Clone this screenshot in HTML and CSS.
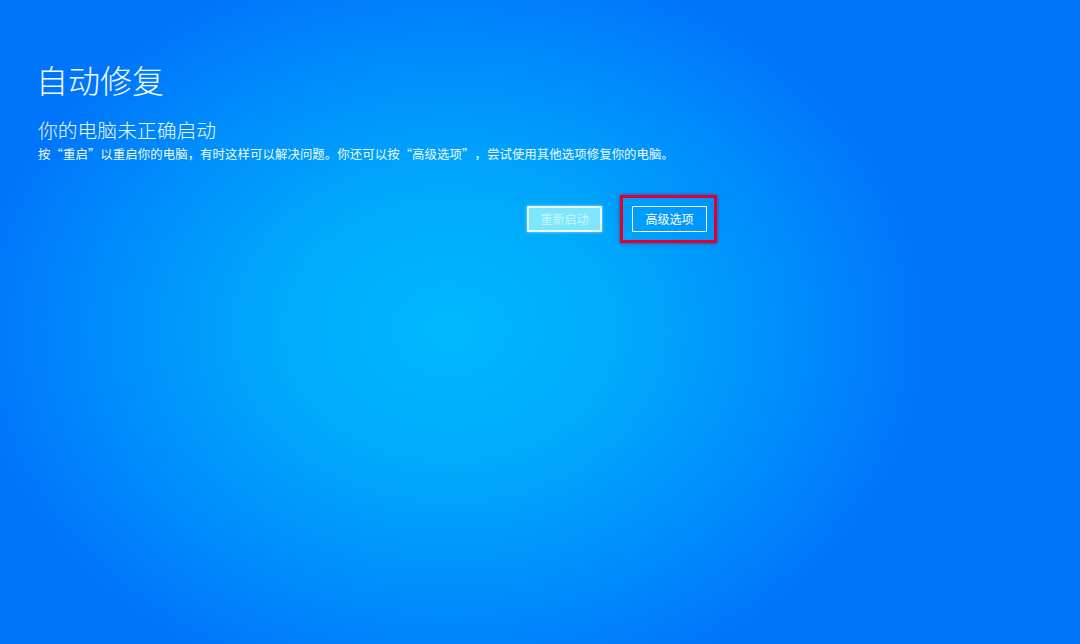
FILE: index.html
```html
<!DOCTYPE html>
<html lang="zh-CN">
<head>
<meta charset="utf-8">
<link rel="stylesheet" href="styles.css">
</head>
<body>
<main class="screen">
  <h1 class="title">自动修复</h1>
  <h2 class="subtitle">你的电脑未正确启动</h2>
  <p class="desc">按“重启”以重启你的电脑，有时这样可以解决问题。你还可以按“高级选项”，尝试使用其他选项修复你的电脑。</p>
  <div class="actions">
    <button class="btn btn-primary">重新启动</button>
    <div class="highlight">
      <button class="btn btn-outline">高级选项</button>
    </div>
  </div>
</main>
</body>
</html>
```

FILE: styles.css
```css
html, body {
  margin: 0;
  padding: 0;
  width: 1080px;
  height: 644px;
  overflow: hidden;
}
body {
  background: radial-gradient(ellipse 480px 380px at 450px 330px, #00b8fd 0%, #00aafc 35%, #008efb 70%, #0074fb 100%);
  background-color: #0074fb;
  font-family: "Noto Sans CJK SC", "Microsoft YaHei", sans-serif;
  color: #ffffff;
  text-spacing-trim: space-all;
}
.screen {
  padding: 56px 0 0 36px;
}
.title {
  margin: 0;
  font-size: 32px;
  font-weight: 300;
  line-height: 46px;
  color: #f2fbff;
}
.subtitle {
  margin: 16px 0 0 2px;
  font-size: 19.8px;
  font-weight: 300;
  line-height: 24px;
  color: #e8fbff;
}
.desc {
  margin: 3px 0 0 2px;
  font-size: 12.4px;
  letter-spacing: 0.08px;
  line-height: 18px;
  color: #eefcff;
  white-space: nowrap;
}
.actions {
  display: flex;
  align-items: center;
  margin: 32px 0 0 491px;
  gap: 18px;
}
.btn {
  font-family: inherit;
  font-size: 12px;
  width: 75px;
  height: 26px;
  padding: 0;
  box-sizing: border-box;
  cursor: pointer;
}
.btn-primary {
  background: #7ee6fc;
  border: 2px solid #e8fdff;
  color: #c8f6ff;
  box-shadow: 0 0 3px rgba(255,255,255,0.6);
}
.btn-outline {
  background: transparent;
  border: 1.5px solid #f4fdff;
  color: #ffffff;
}
.highlight {
  padding: 7px 7px 8px 9px;
  border: 3px solid #e4002b;
  box-shadow: 0 0 4px rgba(80,0,120,0.6);
}
```
